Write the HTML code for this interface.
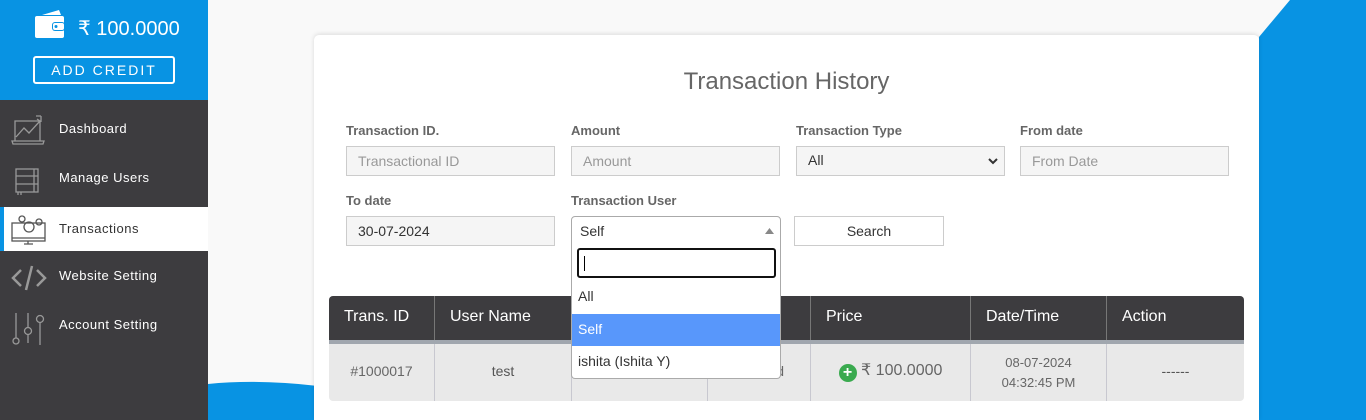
<!DOCTYPE html>
<html><head><meta charset="utf-8"><style>
*{box-sizing:border-box;margin:0;padding:0}
html{width:1366px;height:420px;overflow:hidden}
body{width:1366px;height:420px;overflow:hidden;background:#f9f9f9;font-family:"Liberation Sans",sans-serif;position:relative}
.abs{position:absolute}
.side{left:0;top:0;width:208px;height:420px;background:#3d3c3f}
.top{left:0;top:0;width:208px;height:100px;background:#0893e3}
.nav{left:0;width:208px;height:44px;color:#fff;font-size:13px;letter-spacing:.5px}
.nav span{position:absolute;left:59px;top:14px}
.nav svg{position:absolute;left:11px;top:6px}
.lbl{font-size:13px;font-weight:bold;color:#666}
.inp{height:30px;border:1px solid #ccc;background:#f5f5f5;font-size:14px;color:#999;padding:6px 11px}
.th{color:#fff;font-size:16px;top:296px;height:44px;padding:12px 15px;border-right:1px solid #777}
.td{top:344px;height:57px;font-size:14px;color:#666;text-align:center;border-right:1px solid #c8c8d0}
</style></head><body>
<div class="abs" style="left:1259px;top:0;width:107px;height:420px;background:#0893e3;clip-path:polygon(31px 0,107px 0,107px 420px,0 420px,0 37px)"></div>
<svg class="abs" style="left:208px;top:378px" width="110" height="42"><path d="M0 6 Q50 1 110 8 V42 H0Z" fill="#0893e3"/></svg>
<div class="abs" style="left:314px;top:35px;width:945px;height:385px;background:#fff;border-radius:5px 5px 0 0;box-shadow:0 -1px 5px rgba(0,0,0,.12)"></div>
<div class="abs side"></div>
<div class="abs top"></div>
<svg class="abs" style="left:34px;top:9px" width="34" height="30" viewBox="0 0 34 30"><path d="M8 6 L25 1 L27 6Z" fill="#fff"/><rect x="1" y="7" width="29" height="22" rx="2" fill="#fff"/><rect x="18" y="13" width="13" height="9" rx="3" fill="#0893e3"/><rect x="19" y="14" width="11" height="7" rx="2" fill="#fff"/><circle cx="22" cy="17.5" r="1.5" fill="#0893e3"/></svg>
<div class="abs" style="left:78px;top:16px;color:#fff;font-size:20px">₹ 100.0000</div>
<div class="abs" style="left:33px;top:56px;width:142px;height:28px;border:2px solid #fff;border-radius:3px;color:#fff;font-size:14px;letter-spacing:2px;text-align:center;line-height:24px">ADD CREDIT</div>
<div class="abs nav" style="top:107px"><svg width="36" height="34" viewBox="0 0 36 34" fill="none" stroke="#999" stroke-width="1.3"><path d="M4 28V8h25v20M1 28h32l-1 3H2z M5 24l8-9 5 5 11-12 M26 6l3 2 M30 3v6M25 3h5"/></svg><span>Dashboard</span></div>
<div class="abs nav" style="top:156px"><svg width="36" height="34" viewBox="0 0 36 34" fill="none" stroke="#999" stroke-width="1.3"><rect x="5" y="7" width="22" height="23"/><path d="M5 14h22M5 22h22M23 7v23M7 30v3M10 30v3"/></svg><span>Manage Users</span></div>
<div class="abs nav" style="top:207px;background:#fff;color:#333;height:44px"><div class="abs" style="left:0;top:0;width:4px;height:44px;background:#0893e3"></div><svg width="36" height="34" viewBox="0 0 36 34" fill="none" stroke="#555" stroke-width="1.3"><rect x="1" y="10" width="33" height="18"/><path d="M1 25h33M13 31h9M17 28v3"/><circle cx="18" cy="14" r="5"/><circle cx="11" cy="6" r="3"/><circle cx="28" cy="9" r="3"/></svg><span>Transactions</span></div>
<div class="abs nav" style="top:254px"><svg width="36" height="34" viewBox="0 0 36 34" fill="none" stroke="#999" stroke-width="2.5"><path d="M10 10l-8 8 8 8M26 10l8 8-8 8M21 6l-6 24"/></svg><span>Website Setting</span></div>
<div class="abs nav" style="top:303px"><svg width="36" height="40" viewBox="0 0 36 40" fill="none" stroke="#999" stroke-width="1.3"><path d="M5 4v25M17 4v14M17 26v8M29 14v22"/><circle cx="5" cy="32" r="3"/><circle cx="17" cy="22" r="3.5"/><circle cx="29" cy="10" r="3.5"/></svg><span>Account Setting</span></div>

<div class="abs" style="left:314px;top:68px;width:945px;text-align:center;font-size:24px;color:#666">Transaction History</div>
<div class="abs lbl" style="left:346px;top:123px">Transaction ID.</div>
<div class="abs lbl" style="left:571px;top:123px">Amount</div>
<div class="abs lbl" style="left:796px;top:123px">Transaction Type</div>
<div class="abs lbl" style="left:1020px;top:123px">From date</div>
<div class="abs inp" style="left:346px;top:146px;width:209px">Transactional ID</div>
<div class="abs inp" style="left:571px;top:146px;width:209px">Amount</div>
<div class="abs inp" style="left:796px;top:146px;width:209px;color:#333;padding-top:5px">All<svg class="abs" style="right:6px;top:11px" width="10" height="7"><path d="M1 1l4 4 4-4" stroke="#333" stroke-width="2" fill="none"/></svg></div>
<div class="abs inp" style="left:1020px;top:146px;width:209px">From Date</div>
<div class="abs lbl" style="left:346px;top:193px">To date</div>
<div class="abs lbl" style="left:571px;top:193px">Transaction User</div>
<div class="abs inp" style="left:346px;top:216px;width:209px;color:#333">30-07-2024</div>
<div class="abs" style="left:794px;top:216px;width:150px;height:30px;border:1px solid #ccc;font-size:14px;color:#333;text-align:center;line-height:28px">Search</div>

<div class="abs" style="left:329px;top:296px;width:915px;height:105px;background:#e9e9e9;border-radius:4px;overflow:hidden">
<div class="abs" style="left:0;top:0;width:915px;height:44px;background:#3d3c3f"></div>
<div class="abs" style="left:0;top:44px;width:915px;height:4px;background:#a0a6ae"></div>
</div>
<div class="abs th" style="left:329px;width:106px">Trans. ID</div>
<div class="abs th" style="left:435px;width:137px">User Name</div>
<div class="abs th" style="left:572px;width:136px"></div>
<div class="abs th" style="left:708px;width:103px"></div>
<div class="abs th" style="left:811px;width:160px">Price</div>
<div class="abs th" style="left:971px;width:136px">Date/Time</div>
<div class="abs th" style="left:1107px;width:137px;border:none">Action</div>
<div class="abs td" style="left:329px;width:106px;line-height:54px">#1000017</div>
<div class="abs td" style="left:435px;width:137px;line-height:54px;color:#555">test</div>
<div class="abs td" style="left:572px;width:136px"></div>
<div class="abs td" style="left:708px;width:103px;line-height:54px;text-align:right;padding-right:26px">d</div>
<div class="abs td" style="left:811px;width:160px;line-height:54px;font-size:16px"><span style="display:inline-block;width:18px;height:18px;border-radius:50%;background:#3aaa4f;color:#fff;font-weight:bold;line-height:18px;font-size:16px;vertical-align:-2px">+</span> ₹ 100.0000</div>
<div class="abs td" style="left:971px;width:136px;padding-top:9px;line-height:20px;font-size:13px">08-07-2024<br>04:32:45 PM</div>
<div class="abs td" style="left:1107px;width:137px;line-height:54px;border:none;color:#555">------</div>

<div class="abs" style="left:571px;top:216px;width:210px;height:30px;border:1px solid #aaa;border-radius:4px 4px 0 0;background:#fff;font-size:14px;color:#333;padding:6px 8px">Self<svg class="abs" style="right:6px;top:11px" width="9" height="6"><path d="M0 6L4.5 0 9 6Z" fill="#888"/></svg></div>
<div class="abs" style="left:571px;top:245px;width:210px;height:134px;border:1px solid #aaa;border-top:none;border-radius:0 0 4px 4px;background:#fff;font-size:14px;color:#333">
<div class="abs" style="left:5px;top:3px;width:199px;height:30px;border:2px solid #111;border-radius:3px"><div class="abs" style="left:5px;top:6px;width:1px;height:15px;background:#000"></div></div>
<div class="abs" style="left:0;top:36px;width:208px;height:32px;padding:7px 6px">All</div>
<div class="abs" style="left:0;top:69px;width:208px;height:32px;padding:7px 6px;background:#5897fb;color:#fff">Self</div>
<div class="abs" style="left:0;top:101px;width:208px;height:32px;padding:7px 6px">ishita (Ishita Y)</div>
</div>
</body></html>
